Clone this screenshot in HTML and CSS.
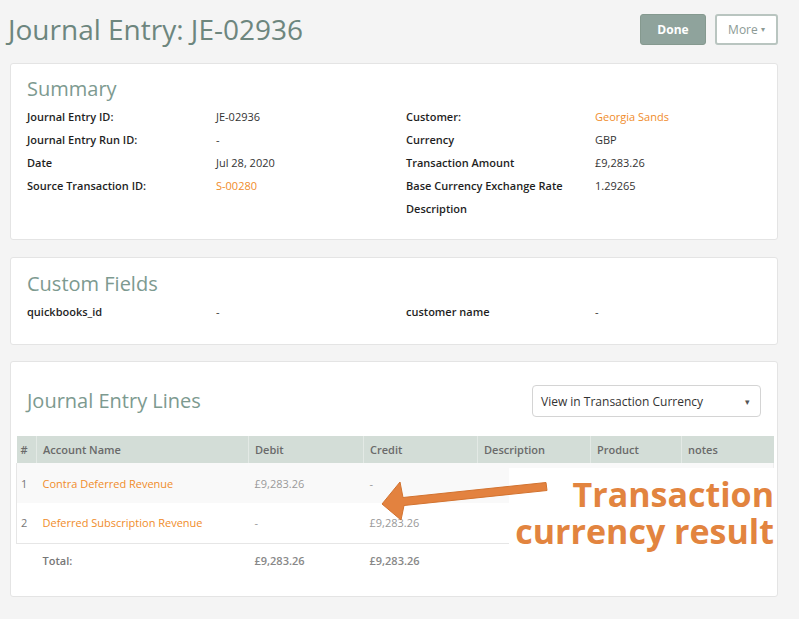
FILE: index.html
```html
<!DOCTYPE html>
<html>
<head>
<meta charset="utf-8">
<link rel="stylesheet" href="styles.css">
</head>
<body>
<div class="page-header">
  <h1 class="page-title">Journal Entry: JE-02936</h1>
  <div class="actions">
    <button class="btn btn-primary">Done</button>
    <button class="btn btn-default">More <span class="caret">▾</span></button>
  </div>
</div>

<section class="card card-summary">
  <h2 class="card-title">Summary</h2>
  <div class="summary-grid">
    <div class="kv-list">
      <div class="kv-label">Journal Entry ID:</div><div class="kv-value">JE-02936</div>
      <div class="kv-label">Journal Entry Run ID:</div><div class="kv-value">-</div>
      <div class="kv-label">Date</div><div class="kv-value">Jul 28, 2020</div>
      <div class="kv-label">Source Transaction ID:</div><div class="kv-value link">S-00280</div>
    </div>
    <div class="kv-list">
      <div class="kv-label">Customer:</div><div class="kv-value link">Georgia Sands</div>
      <div class="kv-label">Currency</div><div class="kv-value">GBP</div>
      <div class="kv-label">Transaction Amount</div><div class="kv-value">£9,283.26</div>
      <div class="kv-label">Base Currency Exchange Rate</div><div class="kv-value">1.29265</div>
      <div class="kv-label">Description</div><div class="kv-value"></div>
    </div>
  </div>
</section>

<section class="card card-custom">
  <h2 class="card-title">Custom Fields</h2>
  <div class="summary-grid">
    <div class="kv-list">
      <div class="kv-label">quickbooks_id</div><div class="kv-value">-</div>
    </div>
    <div class="kv-list">
      <div class="kv-label">customer name</div><div class="kv-value">-</div>
    </div>
  </div>
</section>

<section class="card card-lines">
  <div class="lines-header">
    <h2 class="card-title">Journal Entry Lines</h2>
    <div class="select">
      <span>View in Transaction Currency</span>
      <span class="select-caret">▾</span>
    </div>
  </div>
  <div class="table-wrap">
    <table class="lines-table">
      <colgroup>
        <col style="width:20px"><col style="width:212px"><col style="width:115px"><col style="width:114px"><col style="width:113px"><col style="width:91px"><col style="width:92px">
      </colgroup>
      <thead>
        <tr><th>#</th><th>Account Name</th><th>Debit</th><th>Credit</th><th>Description</th><th>Product</th><th>notes</th></tr>
      </thead>
      <tbody>
        <tr class="row-odd"><td class="num">1</td><td class="link">Contra Deferred Revenue</td><td class="amt">£9,283.26</td><td class="amt">-</td><td></td><td></td><td></td></tr>
        <tr class="row-even"><td class="num">2</td><td class="link">Deferred Subscription Revenue</td><td class="amt">-</td><td class="amt">£9,283.26</td><td></td><td></td><td></td></tr>
      </tbody>
      <tfoot>
        <tr><td></td><td class="total-label">Total:</td><td class="total-amt">£9,283.26</td><td class="total-amt">£9,283.26</td><td></td><td></td><td></td></tr>
      </tfoot>
    </table>
  </div>
  <div class="annotation">
    <div class="annotation-line">Transaction</div>
    <div class="annotation-line">currency result</div>
  </div>
  <svg class="arrow" width="180" height="50" viewBox="0 0 180 50">
    <polygon points="11,27 29,5 32,20.5 175,5.5 176,13.5 33,28.5 30,43" fill="#e3823f" stroke="#d27330" stroke-width="1" stroke-linejoin="round"/>
  </svg>
</section>
</body>
</html>
```

FILE: styles.css
```css
* { box-sizing: border-box; }

body {
  margin: 0;
  background: #f4f4f4;
  font-family: "Open Sans", "Liberation Sans", sans-serif;
  color: #333;
  width: 799px;
  height: 619px;
  overflow: hidden;
}

.page-header {
  display: flex;
  justify-content: space-between;
  align-items: center;
  height: 31px;
  margin: 14px 21px 0 8px;
}

.page-title {
  margin: 0;
  font-size: 28px;
  line-height: 31px;
  font-weight: 400;
  color: #6d867e;
}

.actions {
  display: flex;
  gap: 9px;
}

.btn {
  height: 31px;
  border-radius: 3px;
  font-family: "Open Sans", sans-serif;
  font-size: 12px;
  padding: 0;
  cursor: pointer;
}

.btn-primary {
  width: 66px;
  background: #8fa39c;
  border: 1px solid #85998f;
  color: #fff;
  font-weight: 700;
}

.btn-default {
  width: 63px;
  background: #fff;
  border: 2px solid #b9c5c0;
  color: #8c9a95;
  font-weight: 400;
}

.caret {
  font-size: 8px;
  vertical-align: 2px;
}

.card {
  background: #fff;
  border: 1px solid #e4e4e4;
  border-radius: 3px;
  margin: 0 21px 0 10px;
}

.card-title {
  margin: 0 0 4px;
  font-size: 20px;
  line-height: 24px;
  font-weight: 400;
  color: #7d9a90;
}

.card-summary {
  margin-top: 18px;
  height: 177px;
  padding: 13px 16px 0;
}

.card-custom {
  margin-top: 17px;
  height: 88px;
  padding: 14px 16px 0;
}

.summary-grid {
  display: grid;
  grid-template-columns: 379px 1fr;
}

.kv-list {
  display: grid;
  grid-template-columns: 189px 1fr;
  grid-auto-rows: 23px;
  align-items: center;
  font-size: 11px;
}

.kv-label {
  font-weight: 600;
  color: #1f1f1f;
}

.kv-value {
  color: #333;
}

.link {
  color: #f08c2a;
}

.card-lines {
  position: relative;
  margin-top: 16px;
  height: 236px;
  padding: 23px 0 0;
}

.lines-header {
  display: flex;
  justify-content: space-between;
  align-items: center;
  height: 32px;
  padding: 0 16px 0 16px;
}

.lines-header .card-title {
  margin: 0;
}

.select {
  width: 229px;
  height: 32px;
  border: 1px solid #d4d4d4;
  border-radius: 4px;
  display: flex;
  align-items: center;
  justify-content: space-between;
  padding: 0 10px 0 8px;
  font-size: 12px;
  color: #333;
}

.select-caret {
  font-size: 9px;
  color: #555;
}

.table-wrap {
  margin-top: 19px;
  padding: 0 4px 0 5px;
}

.lines-table {
  width: 757px;
  border-collapse: collapse;
  table-layout: fixed;
  font-size: 11px;
}

.lines-table th {
  height: 27px;
  background: #d3ddd7;
  color: #6a6a6a;
  font-weight: 600;
  text-align: left;
  padding: 0 6px;
  border-left: 1px solid #e3e9e5;
}

.lines-table th:first-child {
  border-left: none;
  padding: 0 4px;
}

.lines-table td {
  padding: 0 6px;
  white-space: nowrap;
}

.lines-table td.num {
  padding: 0 4px;
  color: #777;
}

.lines-table tbody tr {
  height: 40px;
}

.lines-table tbody td:first-child {
  border-left: 1px solid #e6e6e6;
}

.lines-table tbody td:last-child {
  border-right: 1px solid #eeeeee;
}

.row-odd {
  background: #f9f9f9;
}

.row-even {
  border-bottom: 1px solid #e6e6e6;
}

.amt {
  color: #999;
}

.lines-table tfoot tr {
  height: 34px;
}

.total-label {
  color: #777;
  font-weight: 600;
}

.total-amt {
  color: #888;
  font-weight: 600;
}

.annotation {
  position: absolute;
  right: 2px;
  top: 106px;
  padding: 8px 1px 8px 6px;
  background: #fff;
  text-align: right;
  white-space: nowrap;
  font-family: "Open Sans", sans-serif;
  font-weight: 700;
  font-size: 34px;
  color: #e2843f;
}

.annotation-line {
  height: 37px;
  line-height: 37px;
}

.arrow {
  position: absolute;
  left: 360px;
  top: 115px;
}
```
